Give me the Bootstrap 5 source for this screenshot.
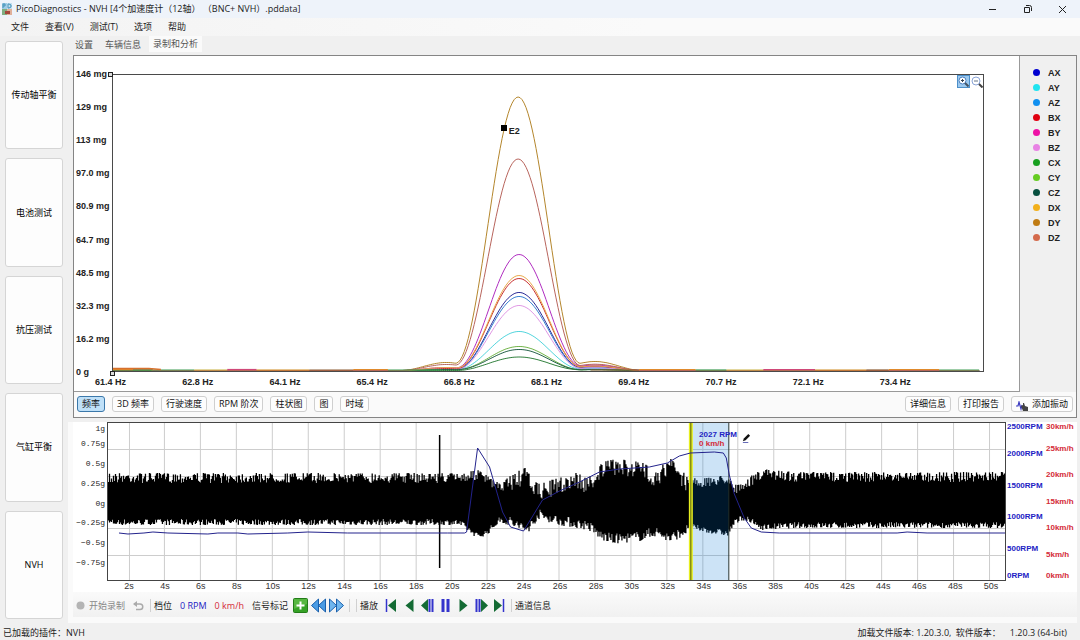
<!DOCTYPE html>
<html lang="zh-CN">
<head>
<meta charset="utf-8">
<meta name="viewport" content="width=device-width, initial-scale=1">
<title>PicoDiagnostics - NVH</title>
<link href="https://cdn.jsdelivr.net/npm/bootstrap@5.3.0/dist/css/bootstrap.min.css" rel="stylesheet">
<style>
  body { font: 9px/12px "Open Sans", "Noto Sans CJK SC", sans-serif; color: #1c1c1c; background: #f0f0f0; }
  button, .btn { font: inherit; color: inherit; }
  svg { display: block; }
  .title-bar { height: 18px; background: #eef3fa; }
  .title-bar > svg { margin: 0 4px 0 2px; }
  .window-controls button { width: 35px; height: 18px; }
  .plain-btn { border: 0; background: none; padding: 0; display: flex; align-items: center; justify-content: center; }
  .menu-bar { height: 18px; background: linear-gradient(90deg, #f3f3f3, #fafafa 60%); }
  .menu-bar a, .page-tabs a { color: #222; text-decoration: none; }
  .menu-bar ul { gap: 16px; padding-left: 11px; }
  .side-bar { width: 63px; padding: 5px 0 4px 5px; gap: 9px; }
  .side-bar .btn { flex: 1 1 0; min-height: 60px; padding: 0; background: #fdfdfd; border: 1px solid #d5d5d5; border-radius: 3px; color: #000; }
  .workspace { padding: 0 3px 0 10px; min-width: 0; }
  .page-tabs { height: 17px; gap: 4px; margin-left: -2px; }
  .page-tabs a { display: block; padding: 3px 4px 2px; color: #555; }
  .page-tabs a.active { background: #fafafa; padding-top: 2px; }
  .spectrum-panel { border: 1px solid #858585; margin-top: 2px; background: #fafafa; }
  .spectrum-area { background: #fff; border-right: 1px solid #999; border-bottom: 1px solid #999; padding: 18px 35px 0 2px; }
  .bold-label { font: bold 9px/12px "Liberation Sans", sans-serif; color: #222; }
  .mg-axis { width: 36px; margin: -6px 0; white-space: nowrap; }
  .spectrum-plot { border: 1px solid #4a4a4a; }
  .spectrum-plot > svg { width: 100%; height: 296px; overflow: visible; }
  .hz-axis { margin: 4px 0 3px 19px; padding-right: 17px; white-space: nowrap; }
  .hz-axis span { flex: 1 1 0; }
  .zoom-tools { top: 0; right: 0; }
  .zoom-tools button { width: 13px; height: 13px; }
  .zoom-tools button.active { background: #9cc9ef; border: 1px solid #4c8fc9; }
  .handle { width: 5px; height: 5px; border: 1px solid #222; background: #ddd; }
  .handle-top { left: -5px; top: -3px; }
  .handle-bottom { left: -3px; bottom: -5px; }
  .peak-point { left: 44.6%; top: 17%; width: 6px; height: 6px; background: #000; }
  .peak-name { left: 45.5%; top: 17%; }
  .channels { width: 56px; padding: 9px 0 0 13px; background: #f0f0f0; }
  .channels li { height: 15px; gap: 8px; }
  .channels i { width: 7px; height: 7px; border-radius: 50%; background: var(--dot); }
  .view-row { padding: 4px 3px 5px; gap: 7px; }
  .view-row .btn { height: 16px; padding: 0 4px; line-height: 14px; border: 1px solid #cfcfcf; border-radius: 3px; background: #fdfdfd; color: #111; white-space: nowrap; }
  .view-row .btn.active { background: #bfe0f8; border-color: #3b78aa; }
  .time-panel { background: #fafafa; margin: 4px 0 0 -5px; padding: 0 0 0 5px; flex-grow: 1; }
  .time-chart { background: #fff; display: grid; grid-template-columns: 34px 1fr 38px 33px; }
  .scale { display: flex; flex-direction: column; white-space: nowrap; }
  .scale span { flex: 2 1 0; display: flex; align-items: center; line-height: 10px; }
  .scale span:first-child { flex-grow: 1; align-items: flex-start; }
  .scale span:last-child { flex-grow: 1; align-items: flex-end; }
  .g-scale { font: 8px/10px "Liberation Mono", monospace; padding: 2px 2px 0 0; margin-bottom: -2px; }
  .g-scale span { justify-content: flex-end; }
  .rpm-scale, .kmh-scale, .readout { font: bold 8px/9px "Liberation Sans", sans-serif; }
  .rpm-scale { padding-left: 1px; }
  .kmh-scale { padding-left: 2px; }
  .blue-ink { color: #2222c4; }
  .red-ink { color: #d42a38; }
  .time-plot { border: 1px solid #444; }
  .time-plot > svg { width: 100%; height: 157px; }
  .readout { left: 65.9%; top: 7px; white-space: nowrap; }
  .time-plot > .pencil { left: 70.7%; top: 10px; width: 9px; height: 10px; }
  .sec-axis { grid-column: 2; margin: 0 -3px 0 4px; font: 9px/11px "Liberation Sans", sans-serif; color: #333; }
  .sec-axis span { flex: 1 1 0; text-align: center; }
  .play-bar { height: 25px; padding: 2px 0 0 3px; background: linear-gradient(#fafafa, #f1f1f1); }
  .play-bar .plain-btn { min-width: 18px; height: 16px; white-space: nowrap; }
  .play-bar .plain-btn:disabled { color: #888; }
  .divider { width: 1px; height: 13px; background: #d0d0d0; margin: 0 3px; }
  .status-bar { height: 17px; padding: 2px 13px 0 3px; }
</style>
</head>
<body>
<div class="d-flex flex-column min-vh-100">
  <header class="title-bar d-flex align-items-center">
    <svg width="10" height="12" viewBox="0 0 10 12"><path d="M0 0h5v6H0z" fill="#9fcbe6"/><path d="M5 0h5v6H5z" fill="#c3dff0"/><path d="M1 5V1h2v2H1M6 1h1l2 1v2L7 5H6z" fill="none" stroke="#4292b8"/><path d="M0 6h5v6H0z" fill="#7fae82"/><path d="M5 6h5v6H5z" fill="#e0b09a"/><path d="M3 8h5v3H3z" fill="#a3473c"/></svg>
    <span class="flex-grow-1 text-nowrap">PicoDiagnostics - NVH [4个加速度计（12轴） （BNC+ NVH）.pddata]</span>
    <div class="window-controls d-flex">
      <button class="plain-btn" aria-label="最小化"><svg width="9" height="9" viewBox="0 0 9 9"><path d="M1 4.500h7" stroke="#222"/></svg></button>
      <button class="plain-btn" aria-label="还原"><svg width="9" height="9" viewBox="0 0 9 9"><path d="M1.500 2.500h5v5h-5zM3 .5h3.500a2 2 0 0 1 2 2V6" fill="none" stroke="#222"/></svg></button>
      <button class="plain-btn" aria-label="关闭"><svg width="9" height="9" viewBox="0 0 9 9"><path d="M1 1l7 7M8 1L1 8" stroke="#222"/></svg></button>
    </div>
  </header>
  <nav class="menu-bar d-flex align-items-center" aria-label="菜单">
    <ul class="d-flex list-unstyled mb-0">
      <li><a href="#">文件</a></li><li><a href="#">查看(V)</a></li><li><a href="#">测试(T)</a></li><li><a href="#">选项</a></li><li><a href="#">帮助</a></li>
    </ul>
  </nav>

  <div class="d-flex flex-grow-1">
    <aside class="side-bar d-flex flex-column flex-shrink-0">
      <button class="btn">传动轴平衡</button>
      <button class="btn">电池测试</button>
      <button class="btn">抗压测试</button>
      <button class="btn">气缸平衡</button>
      <button class="btn">NVH</button>
    </aside>

    <main class="workspace flex-grow-1 d-flex flex-column">
      <ul class="page-tabs d-flex list-unstyled mb-0">
        <li><a href="#">设置</a></li><li><a href="#">车辆信息</a></li><li><a class="active" href="#" aria-current="page">录制和分析</a></li>
      </ul>

      <section class="spectrum-panel">
        <div class="d-flex">
          <div class="spectrum-area flex-grow-1">
            <div class="d-flex">
              <div class="mg-axis bold-label d-flex flex-column justify-content-between">
                <span>146 mg</span><span>129 mg</span><span>113 mg</span><span>97.0 mg</span><span>80.9 mg</span><span>64.7 mg</span><span>48.5 mg</span><span>32.3 mg</span><span>16.2 mg</span><span>0 g</span>
              </div>
              <div class="spectrum-plot position-relative flex-grow-1">
                <svg id="spectrum" viewBox="0 0 872 296" preserveAspectRatio="none"></svg>
                <i class="handle handle-top position-absolute"></i>
                <i class="handle handle-bottom position-absolute"></i>
                <i class="peak-point position-absolute"></i>
                <span class="peak-name bold-label position-absolute">E2</span>
                <div class="zoom-tools position-absolute d-flex">
                  <button class="plain-btn active" aria-label="放大"><svg width="11" height="11" viewBox="0 0 11 11"><circle cx="4.500" cy="4.500" r="3.500" fill="#fff" stroke="#4a7fc0"/><path d="M3 4.500h3M4.500 3v3" stroke="#345"/><path d="M7 7l3.500 3.500" stroke="#456" stroke-width="2"/></svg></button>
                  <button class="plain-btn" aria-label="缩小"><svg width="12" height="12" viewBox="0 0 12 12"><circle cx="5" cy="5" r="4" fill="#fff" stroke="#8aa4d8"/><path d="M3 5h4" stroke="#678"/><path d="M8 8l3.500 3.500" stroke="#444" stroke-width="2"/></svg></button>
                </div>
              </div>
            </div>
            <div class="hz-axis bold-label d-flex">
              <span>61.4 Hz</span><span>62.8 Hz</span><span>64.1 Hz</span><span>65.4 Hz</span><span>66.8 Hz</span><span>68.1 Hz</span><span>69.4 Hz</span><span>70.7 Hz</span><span>72.1 Hz</span><span>73.4 Hz</span>
            </div>
          </div>
          <ul class="channels bold-label list-unstyled mb-0 flex-shrink-0" id="channels"></ul>
        </div>
        <div class="view-row d-flex">
          <button class="btn active">频率</button>
          <button class="btn">3D 频率</button>
          <button class="btn">行驶速度</button>
          <button class="btn">RPM 阶次</button>
          <button class="btn">柱状图</button>
          <button class="btn">图</button>
          <button class="btn">时域</button>
          <button class="btn ms-auto">详细信息</button>
          <button class="btn">打印报告</button>
          <button class="btn d-flex"><svg class="me-1 mt-1" width="12" height="10" viewBox="0 0 12 10"><path d="M0 5h2l1-4 2 7 1-4" fill="none" stroke="#3a3ac0" stroke-width="1.200"/><path d="M5 5l2-1V2h1l1 3 3 1v4H7z" fill="#444"/></svg>添加振动</button>
        </div>
      </section>

      <section class="time-panel">
        <div class="time-chart">
          <div class="scale g-scale"><span>1g</span><span>0.75g</span><span>0.5g</span><span>0.25g</span><span>0g</span><span>−0.25g</span><span>−0.5g</span><span>−0.75g</span><span></span></div>
          <div class="time-plot position-relative">
            <svg id="recording" viewBox="0 0 898 157" preserveAspectRatio="none"></svg>
            <div class="readout position-absolute"><div class="blue-ink">2027 RPM</div><div class="red-ink">0 km/h</div></div>
            <svg class="pencil position-absolute" viewBox="0 0 10 11"><path d="M1 9l1-3 5-5 2 2-5 5z" fill="#111"/><path d="M1 10.500h6" stroke="#555bb0"/></svg>
          </div>
          <div class="scale rpm-scale blue-ink"><span>2500RPM</span><span>2000RPM</span><span>1500RPM</span><span>1000RPM</span><span>500RPM</span><span>0RPM</span></div>
          <div class="scale kmh-scale red-ink"><span>30km/h</span><span>25km/h</span><span>20km/h</span><span>15km/h</span><span>10km/h</span><span>5km/h</span><span>0km/h</span></div>
          <div class="sec-axis d-flex" id="seconds"></div>
        </div>
        <div class="play-bar d-flex align-items-center">
          <button class="plain-btn" disabled><svg class="me-1" width="9" height="9" viewBox="0 0 9 9"><circle cx="4.500" cy="4.500" r="4" fill="#b4b4b4"/></svg>开始录制</button>
          <button class="plain-btn ms-1" disabled aria-label="撤销"><svg width="11" height="10" viewBox="0 0 11 10"><path d="M1 3h6a2.500 2.500 0 0 1 0 5.500H3" fill="none" stroke="#aaa" stroke-width="1.500"/><path d="M4 0v6L0 3z" fill="#aaa"/></svg></button>
          <i class="divider"></i>
          <span>档位</span>
          <span class="blue-ink ms-2">0 RPM</span>
          <span class="red-ink ms-2">0 km/h</span>
          <span class="ms-2 me-1">信号标记</span>
          <button class="plain-btn" aria-label="添加标记"><svg width="15" height="15" viewBox="0 0 15 15"><rect x=".5" y=".5" width="14" height="14" rx="1" fill="#35a126" stroke="#227c18"/><path d="M1 1h13v5L1 11z" fill="#6cc653" opacity=".6"/><path d="M7.500 3.500v8M3.500 7.500h8" stroke="#fff" stroke-width="2"/></svg></button>
          <button class="plain-btn" aria-label="上一标记"><svg width="15" height="15" viewBox="0 0 15 15"><path d="M7.500 1v13L.5 7.500zM14.500 1v13L7.500 7.500z" fill="#4a9be4" stroke="#1b60ac"/></svg></button>
          <button class="plain-btn" aria-label="下一标记"><svg width="15" height="15" viewBox="0 0 15 15"><path d="M.5 1v13L7.500 7.500zM7.500 1v13l7-6.500z" fill="#6fb6ee" stroke="#1b60ac"/></svg></button>
          <i class="divider"></i><i class="divider"></i>
          <span class="me-1">播放</span>
          <button class="plain-btn" aria-label="回到开头"><svg width="12" height="13" viewBox="0 0 12 13"><path d="M1.500 0v13" stroke="#3333cc" stroke-width="1.500"/><path d="M11 0v13L3 6.500z" fill="#146b34"/></svg></button>
          <button class="plain-btn" aria-label="反向播放"><svg width="9" height="13" viewBox="0 0 9 13"><path d="M8.500 0v13L.5 6.500z" fill="#146b34"/></svg></button>
          <button class="plain-btn" aria-label="后退一步"><svg width="13" height="13" viewBox="0 0 13 13"><path d="M7 0v13L0 6.500z" fill="#146b34"/><path d="M8.500 0v13M11.500 0v13" stroke="#3333cc" stroke-width="2"/></svg></button>
          <button class="plain-btn" aria-label="暂停"><svg width="9" height="13" viewBox="0 0 9 13"><path d="M2 0v13M7 0v13" stroke="#3333cc" stroke-width="3"/></svg></button>
          <button class="plain-btn" aria-label="播放"><svg width="9" height="13" viewBox="0 0 9 13"><path d="M.5 0v13l8-6.500z" fill="#146b34"/></svg></button>
          <button class="plain-btn" aria-label="前进一步"><svg width="13" height="13" viewBox="0 0 13 13"><path d="M6 0v13l7-6.500z" fill="#146b34"/><path d="M1.500 0v13M4.500 0v13" stroke="#3333cc" stroke-width="2"/></svg></button>
          <button class="plain-btn" aria-label="跳到结尾"><svg width="12" height="13" viewBox="0 0 12 13"><path d="M10.500 0v13" stroke="#3333cc" stroke-width="1.500"/><path d="M1 0v13l8-6.500z" fill="#146b34"/></svg></button>
          <i class="divider"></i>
          <button class="plain-btn">通道信息</button>
        </div>
      </section>
    </main>
  </div>

  <footer class="status-bar d-flex align-items-center justify-content-between">
    <span>已加载的插件：NVH</span>
    <span>加载文件版本: 1.20.3.0,&ensp;软件版本：&emsp;1.20.3 (64-bit)</span>
  </footer>
</div>
<script src="https://cdn.jsdelivr.net/npm/bootstrap@5.3.0/dist/js/bootstrap.bundle.min.js"></script>
<script>
  const shape = (parent, tag, attrs) => {
    const el = document.createElementNS('http://www.w3.org/2000/svg', tag);
    for (const k in attrs) el.setAttribute(k, attrs[k]);
    parent.appendChild(el);
  };
  let seed = 7;
  const rnd = () => (seed = (seed * 16807) % 2147483647) / 2147483647;

  // Channels: legend colour, trace colour, peak height, left and right side-lobe height
  const channels = [
    ['AX', '#0000d0', '#2a2a96', 78, 1, 4], ['AY', '#20e4f0', '#50d4dc', 39, 1, 2], ['AZ', '#1090f0', '#3880d0', 74, 1, 3],
    ['BX', '#e00010', '#c83030', 92, 2, 5], ['BY', '#ee12a6', '#b02cc0', 116, 3, 6], ['BZ', '#e882e4', '#e098e4', 65, 1, 3],
    ['CX', '#18a020', '#30803c', 13.5, 0, 1], ['CY', '#66cc22', '#70b448', 24, 1, 1], ['CZ', '#085040', '#246048', 21, 1, 1],
    ['DX', '#f2b01c', '#e8a848', 95, 3, 5], ['DY', '#c07c14', '#b4862c', 273.5, 8, 10], ['DZ', '#d46a4c', '#b8645c', 211.5, 6, 7]
  ];
  const spectrum = document.getElementById('spectrum');
  const bell = (d, w) => Math.abs(d) < w ? Math.cos(Math.PI * d / (2 * w)) ** 2 : 0;
  channels.forEach(([name, dot, ink, peak, left, right]) => {
    document.getElementById('channels').insertAdjacentHTML('beforeend',
      `<li class="d-flex align-items-center"><i style="--dot:${dot}"></i>${name}</li>`);
    const pts = [];
    const mid = peak > 200 ? 406 : 407;
    for (let x = 0; x <= 868; x += 2) {
      const h = peak * bell(x - mid, 63) + left * bell(x - 334, 46) + right * bell(x - 483, 48) * .9;
      pts.push(x + ',' + (295.5 - h - (x < 40 ? left / 4 : 0)).toFixed(1));
    }
    shape(spectrum, 'polyline', { points: pts.join(' '), fill: 'none', stroke: ink, 'stroke-width': 1 });
  });
  // Noise floor: short runs of whichever channel is on top
  const floor = ['#e08a2c', '#3c9c50', '#c8b03c', '#d04878', '#d08a1c', '#8c5a30'];
  for (let x = 0, i = 0; x < 868; i++) {
    const w = 20 + rnd() * 45;
    if (x + w < 340 || x > 475) shape(spectrum, 'path', { d: `M${x} ${i % 3 ? 295 : 294.5}H${Math.min(868, x + w)}`, stroke: floor[i % 6], 'stroke-width': 1.2 });
    x += w;
  }
  shape(spectrum, 'path', { d: 'M0 293.500h36l12 1', stroke: '#d8702c', 'stroke-width': 1.5, fill: 'none' });

  const rec = document.getElementById('recording');
  let grid = '';
  for (let i = 0; i < 25; i++) grid += `M${Math.round(20.5 + i * 35.88) + .5} 0V157`;
  for (let i = 1; i < 6; i++) grid += `M0 ${Math.round(i * 26.3) + .5}H898`;
  shape(rec, 'path', { d: grid, stroke: '#cdcdcd' });

  // Vibration envelope: [position, top, bottom]
  const env = [[0,55,99],[350,55,99],[358,54,104],[370,52,113],[380,58,108],[392,66,96],[402,57,100],[417,50,107],[422,56,105],[430,66,93],
    [450,60,99],[468,54,102],[480,60,104],[493,45,114],[505,41,118],[532,43,115],[548,52,110],[563,40,117],[577,55,109],[586,60,104],
    [600,60,107],[620,56,110],[626,65,100],[635,67,94],[643,58,98],[655,51,104],[690,54,102],[898,54,102]];
  const at = x => {
    let i = 1;
    while (i < env.length - 1 && env[i][0] < x) i++;
    const a = env[i - 1], b = env[i], t = (x - a[0]) / (b[0] - a[0]);
    return [a[1] + (b[1] - a[1]) * t, a[2] + (b[2] - a[2]) * t];
  };
  let wave = '';
  for (let x = 0; x < 898; x++) {
    const [t, b] = at(x), busy = x > 400 && x < 580 ? 1.7 : 1;
    wave += `M${x + .5} ${(t - 5 + Math.pow(rnd(), 1.3) * 10 * busy).toFixed(1)}V${(b + 3 - Math.pow(rnd(), 1.3) * 6 * busy).toFixed(1)}`;
  }
  shape(rec, 'path', { d: wave, stroke: '#000', 'stroke-width': 1.3 });
  shape(rec, 'path', { d: 'M332 12V145', stroke: '#000', 'stroke-width': 1.5 });

  shape(rec, 'rect', { x: 585, y: 0, width: 36, height: 157, fill: '#0072d2', opacity: .2 });
  shape(rec, 'path', { d: 'M621.500 0V157', stroke: '#233' });
  shape(rec, 'path', { d: 'M583.500 0V157', stroke: '#e6ee20', 'stroke-width': 4 });
  shape(rec, 'path', { d: 'M583.500 0V157', stroke: '#555a10' });

  shape(rec, 'polyline', { points: '11,110 20,111 36,110 45,109 60,110 100,111 110,110 130,110 140,111 180,110 200,109 240,110 340,110 357,110 359,109 370,25 382,44 395,89 403,104 416,108 435,77 452,68 472,59 492,49 512,46 542,44 560,40 572,33 583,30 607,29 616,30 619,35 622,52 627,71 637,95 644,105 654,109 672,110 790,110 800,109 820,110 898,110',
    fill: 'none', stroke: '#22228c', 'stroke-width': 1 });

  for (let s = 2; s <= 50; s += 2) document.getElementById('seconds').insertAdjacentHTML('beforeend', `<span>${s}s</span>`);
</script>
</body>
</html>
